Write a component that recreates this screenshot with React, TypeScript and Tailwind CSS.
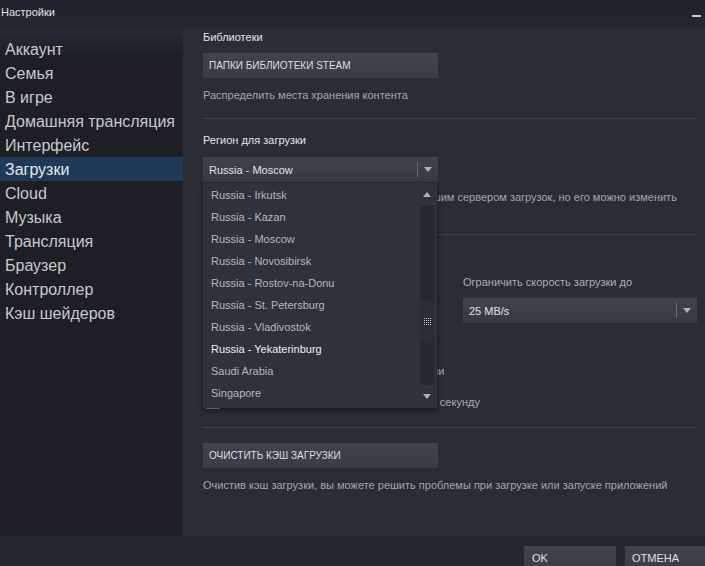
import React from 'react';

const NAV = ['Аккаунт', 'Семья', 'В игре', 'Домашняя трансляция', 'Интерфейс', 'Загрузки', 'Cloud', 'Музыка', 'Трансляция', 'Браузер', 'Контроллер', 'Кэш шейдеров'];

const REGIONS = ['Russia - Irkutsk', 'Russia - Kazan', 'Russia - Moscow', 'Russia - Novosibirsk', 'Russia - Rostov-na-Donu', 'Russia - St. Petersburg', 'Russia - Vladivostok', 'Russia - Yekaterinburg', 'Saudi Arabia', 'Singapore'];

function Caret({ up = false }: { up?: boolean }) {
  return (
    <svg width="8" height="5" viewBox="0 0 8 5" className="block">
      <path d={up ? 'M0 5h8L4 0z' : 'M0 0h8L4 5z'} fill="#aeb2b7" />
    </svg>
  );
}

function Select({ value, className = '' }: { value: string; className?: string }) {
  return (
    <div className={`flex h-[25px] items-center bg-linear-to-b from-[#3e434c] to-[#363a43] pl-[6px] text-[11px] text-[#e1e3e5] ${className}`}>
      <span className="flex-1">{value}</span>
      <span className="h-[15px] w-px bg-[#686d75]" />
      <span className="flex w-[20px] justify-center"><Caret /></span>
    </div>
  );
}

function Btn({ children }: { children: React.ReactNode }) {
  return (
    <div className="flex h-[25px] w-[235px] items-center bg-linear-to-b from-[#3f444d] to-[#383c45] pl-[6px] text-[10px] text-[#dcdee1]">
      {children}
    </div>
  );
}

function Check({ label, className = '' }: { label: string; className?: string }) {
  return (
    <div className={`flex h-[16px] items-center ${className}`}>
      <span className="ml-[3px] h-[14px] w-[14px] border border-[#8a8e94] bg-[#1e2025]" />
      <span className="ml-[11px] text-[#a9adb2]">{label}</span>
    </div>
  );
}

function Grip() {
  return (
    <div className="grid grid-cols-4 gap-[1px]">
      {Array.from({ length: 16 }).map((_, i) => <span key={i} className="h-px w-px bg-[#c3c6ca]" />)}
    </div>
  );
}

export default function App() {
  return (
    <div className="flex h-[566px] w-[705px] flex-col overflow-hidden bg-[#2a2d33] font-['Liberation_Sans',Arial,sans-serif]">
      <header className="flex h-[29px] shrink-0 items-start justify-between bg-linear-to-b from-[#1c222b] to-[#26292e] pl-[1px] pt-[5px]">
        <span className="text-[11px] leading-[14px] text-[#e0e2e4]">Настройки</span>
        <span className="mr-[4px] mt-[10px] h-[2px] w-[9px] bg-[#c9cbce]" />
      </header>

      <div className="flex min-h-0 flex-1">
        <nav className="w-[183px] shrink-0 bg-linear-to-b from-[#252d3a] via-[#1d1f24] via-[5%] to-[#1d1f24] pt-[8px]">
          {NAV.map((n) => (
            <div key={n} className={`h-[24px] pl-[5px] pt-px text-[16px] leading-[24px] ${n === 'Загрузки' ? 'bg-[#1f3a57] text-[#e4e7ea]' : 'text-[#c6cace]'}`}>{n}</div>
          ))}
        </nav>

        <main className="min-w-0 flex-1 pl-[20px] pr-[8px] pt-[1px] text-[11px] leading-[14px]">
          <div className="text-[#e2e5e8]">Библиотеки</div>
          <div className="mt-[9px]"><Btn>ПАПКИ БИБЛИОТЕКИ STEAM</Btn></div>
          <div className="mt-[10px] text-[#a2a7ac]">Распределить места хранения контента</div>
          <div className="mt-[16px] h-px bg-[#3e424a]" />

          <div className="mt-[14px] text-[#e2e5e8]">Регион для загрузки</div>
          <div className="relative mt-[10px] w-[235px]">
            <Select value="Russia - Moscow" />
            <div className="absolute left-0 top-[26px] z-10 flex h-[225px] w-[234px] bg-[#2f323a] shadow-[0_2px_6px_rgba(0,0,0,0.5)]">
              <div className="flex-1 pt-[1px]">
                {REGIONS.map((r) => (
                  <div key={r} className={`h-[22px] pl-[8px] text-[11px] leading-[22px] ${r === 'Russia - Yekaterinburg' ? 'text-[#eceef0]' : 'text-[#b4b8bd]'}`}>{r}</div>
                ))}
              </div>
              <div className="mr-[3px] flex w-[14px] flex-col">
                <div className="flex h-[23px] items-center justify-center"><Caret up /></div>
                <div className="flex flex-1 flex-col bg-[#26292e]">
                  <div className="h-[95px]" />
                  <div className="flex h-[40px] items-center justify-center bg-[#2b2e35]"><Grip /></div>
                </div>
                <div className="flex h-[23px] items-center justify-center"><Caret /></div>
              </div>
            </div>
          </div>
          <div className="mt-[7px] leading-[16px] text-[#a2a7ac]">Регион автоматически определяется ближайшим сервером загрузок, но его можно изменить вручную</div>
          <div className="mt-[13px] h-px bg-[#3e424a]" />

          <div className="mt-[13px] text-[#e2e5e8]">Ограничения загрузки</div>
          <div className="mt-[13px] flex">
            <div className="w-[260px]">
              <Check label="Ограничить скорость загрузки" className="mt-[27px]" />
            </div>
            <div className="flex-1">
              <div className="text-[#a9adb2]">Ограничить скорость загрузки до</div>
              <Select value="25 MB/s" className="mt-[9px]" />
            </div>
          </div>
          <Check label="Разрешить загрузку во время игры" className="mt-[10px]" />
          <Check label="Замедлять загрузку во время трансляции" className="mt-[14px]" />
          <Check label="Отображать скорость загрузки в битах в секунду" className="mt-[15px]" />
          <div className="mt-[17px] h-px bg-[#3e424a]" />

          <div className="mt-[15px]"><Btn>ОЧИСТИТЬ КЭШ ЗАГРУЗКИ</Btn></div>
          <div className="mt-[10px] text-[#a2a7ac]">Очистив кэш загрузки, вы можете решить проблемы при загрузке или запуске приложений</div>
        </main>
      </div>

      <footer className="flex h-[30px] shrink-0 justify-end gap-[9px] bg-[#24272b] pt-[10px]">
        <div className="h-[24px] w-[92px] bg-linear-to-b from-[#3f444d] to-[#383c45] pl-[8px] pt-[4px] text-[11px] text-[#dfe1e3]">OK</div>
        <div className="h-[24px] w-[80px] bg-linear-to-b from-[#3f444d] to-[#383c45] pl-[7px] pt-[4px] text-[11px] text-[#dfe1e3]">ОТМЕНА</div>
      </footer>
    </div>
  );
}
